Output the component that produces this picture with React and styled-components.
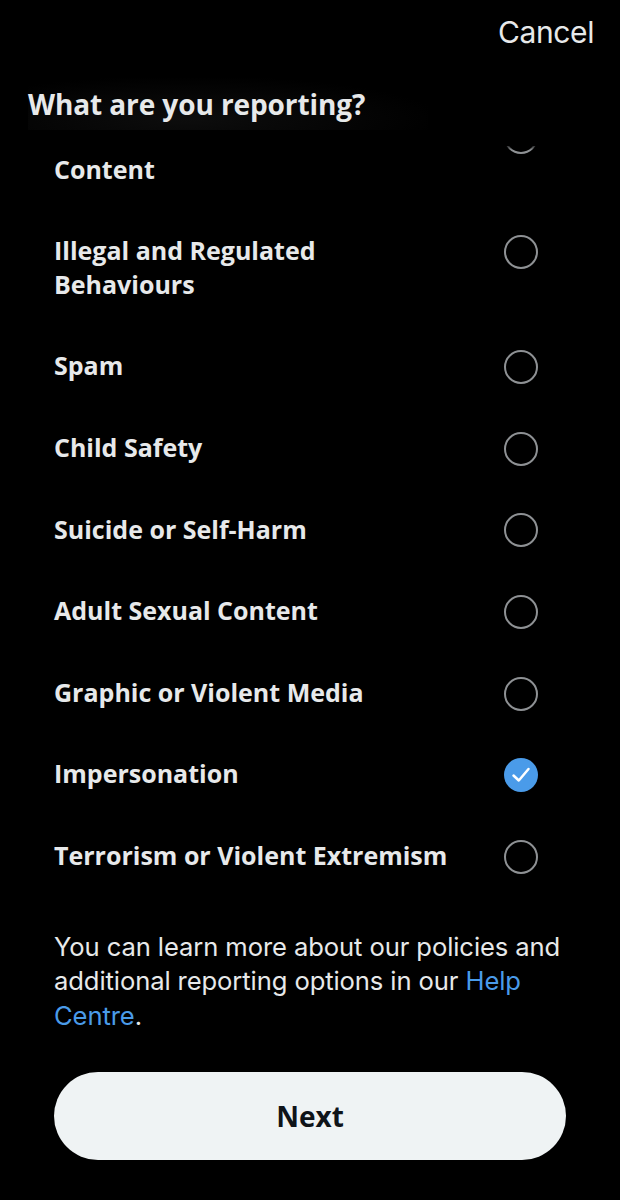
import React, { useState } from 'react';
import styled, { createGlobalStyle } from 'styled-components';

const GlobalStyle = createGlobalStyle`
  html, body {
    margin: 0;
    padding: 0;
    background: #000;
  }
  * { box-sizing: border-box; }
`;

const Screen = styled.div`
  position: relative;
  width: 620px;
  height: 1200px;
  overflow: hidden;
  background: #000;
  font-family: 'Open Sans', 'Noto Sans', sans-serif;
  color: #e7e9ea;
`;

const Header = styled.div`
  position: absolute;
  top: 0;
  left: 0;
  right: 0;
  height: 146px;
  background: #000;
  z-index: 2;
  display: flex;
  flex-direction: column;
  padding: 12px 26px 0 28px;
  &:after {
    content: '';
    position: absolute;
    left: 0;
    right: 0;
    bottom: -4px;
    height: 6px;
    background: linear-gradient(#000, rgba(0, 0, 0, 0));
  }
`;

const CancelButton = styled.button`
  align-self: flex-end;
  background: none;
  border: none;
  padding: 0;
  color: #e7e9ea;
  font-family: 'Inter', 'Liberation Sans', sans-serif;
  font-size: 30px;
  font-weight: 400;
  letter-spacing: -0.4px;
  line-height: 40px;
`;

const Title = styled.h1`
  margin: 26px 0 0;
  padding: 6px 0;
  font-size: 28px;
  font-weight: 700;
  line-height: 40px;
  color: #e7e9ea;
  letter-spacing: -0.1px;
  width: 400px;
  background: radial-gradient(ellipse at 40% 80%, #0d0d0d 0%, #000 75%);
`;

const List = styled.ul`
  list-style: none;
  margin: 0;
  padding: 95px 0 0;
`;

const Row = styled.li`
  display: flex;
  align-items: flex-start;
  padding: 24px 0 24px 54px;
  position: relative;
`;

const Label = styled.span`
  font-size: 25px;
  font-weight: 700;
  line-height: 33.6px;
  color: #e7e9ea;
  max-width: 400px;
  white-space: pre-line;
`;

const Radio = styled.span`
  position: absolute;
  right: 82px;
  top: 24px;
  margin-top: 0.8px;
  width: 34px;
  height: 34px;
  border-radius: 50%;
  border: ${p => (p.$checked ? 'none' : '2.5px solid #8e9194')};
  background: ${p => (p.$checked ? '#4a9be9' : 'transparent')};
  display: flex;
  align-items: center;
  justify-content: center;
`;

const Footer = styled.div`
  padding: 33px 54px 0;
`;

const Info = styled.p`
  margin: 0;
  font-family: 'Inter', 'Liberation Sans', sans-serif;
  font-size: 25.6px;
  font-weight: 400;
  line-height: 34.5px;
  letter-spacing: -0.1px;
  color: #e7e9ea;
`;

const HelpLink = styled.a`
  color: #4a9be9;
  text-decoration: none;
`;

const NextButton = styled.button`
  display: flex;
  align-items: center;
  justify-content: center;
  width: 100%;
  height: 88px;
  margin-top: 39px;
  border: none;
  border-radius: 44px;
  background: #eff3f4;
  color: #0f1419;
  font-family: 'Open Sans', 'Noto Sans', sans-serif;
  font-size: 28px;
  font-weight: 700;
`;

const options = [
  'Violent or Hateful\nContent',
  'Illegal and Regulated Behaviours',
  'Spam',
  'Child Safety',
  'Suicide or Self-Harm',
  'Adult Sexual Content',
  'Graphic or Violent Media',
  'Impersonation',
  'Terrorism or Violent Extremism',
];

const Check = () => (
  <svg width="24" height="24" viewBox="0 0 24 24" fill="none">
    <path d="M4.5 12.5 L9.8 17.5 L19.5 6" stroke="#fff" strokeWidth="2.5" strokeLinecap="round" strokeLinejoin="round" />
  </svg>
);

export default function App() {
  const [selected] = useState('Impersonation');
  return (
    <Screen>
      <GlobalStyle />
      <Header>
        <CancelButton>Cancel</CancelButton>
        <Title>What are you reporting?</Title>
      </Header>
      <List>
        {options.map(opt => (
          <Row key={opt}>
            <Label>{opt}</Label>
            <Radio $checked={opt === selected}>{opt === selected && <Check />}</Radio>
          </Row>
        ))}
      </List>
      <Footer>
        <Info>
          You can learn more about our policies and additional reporting options in our{' '}
          <HelpLink href="#">Help Centre</HelpLink>.
        </Info>
        <NextButton>Next</NextButton>
      </Footer>
    </Screen>
  );
}
